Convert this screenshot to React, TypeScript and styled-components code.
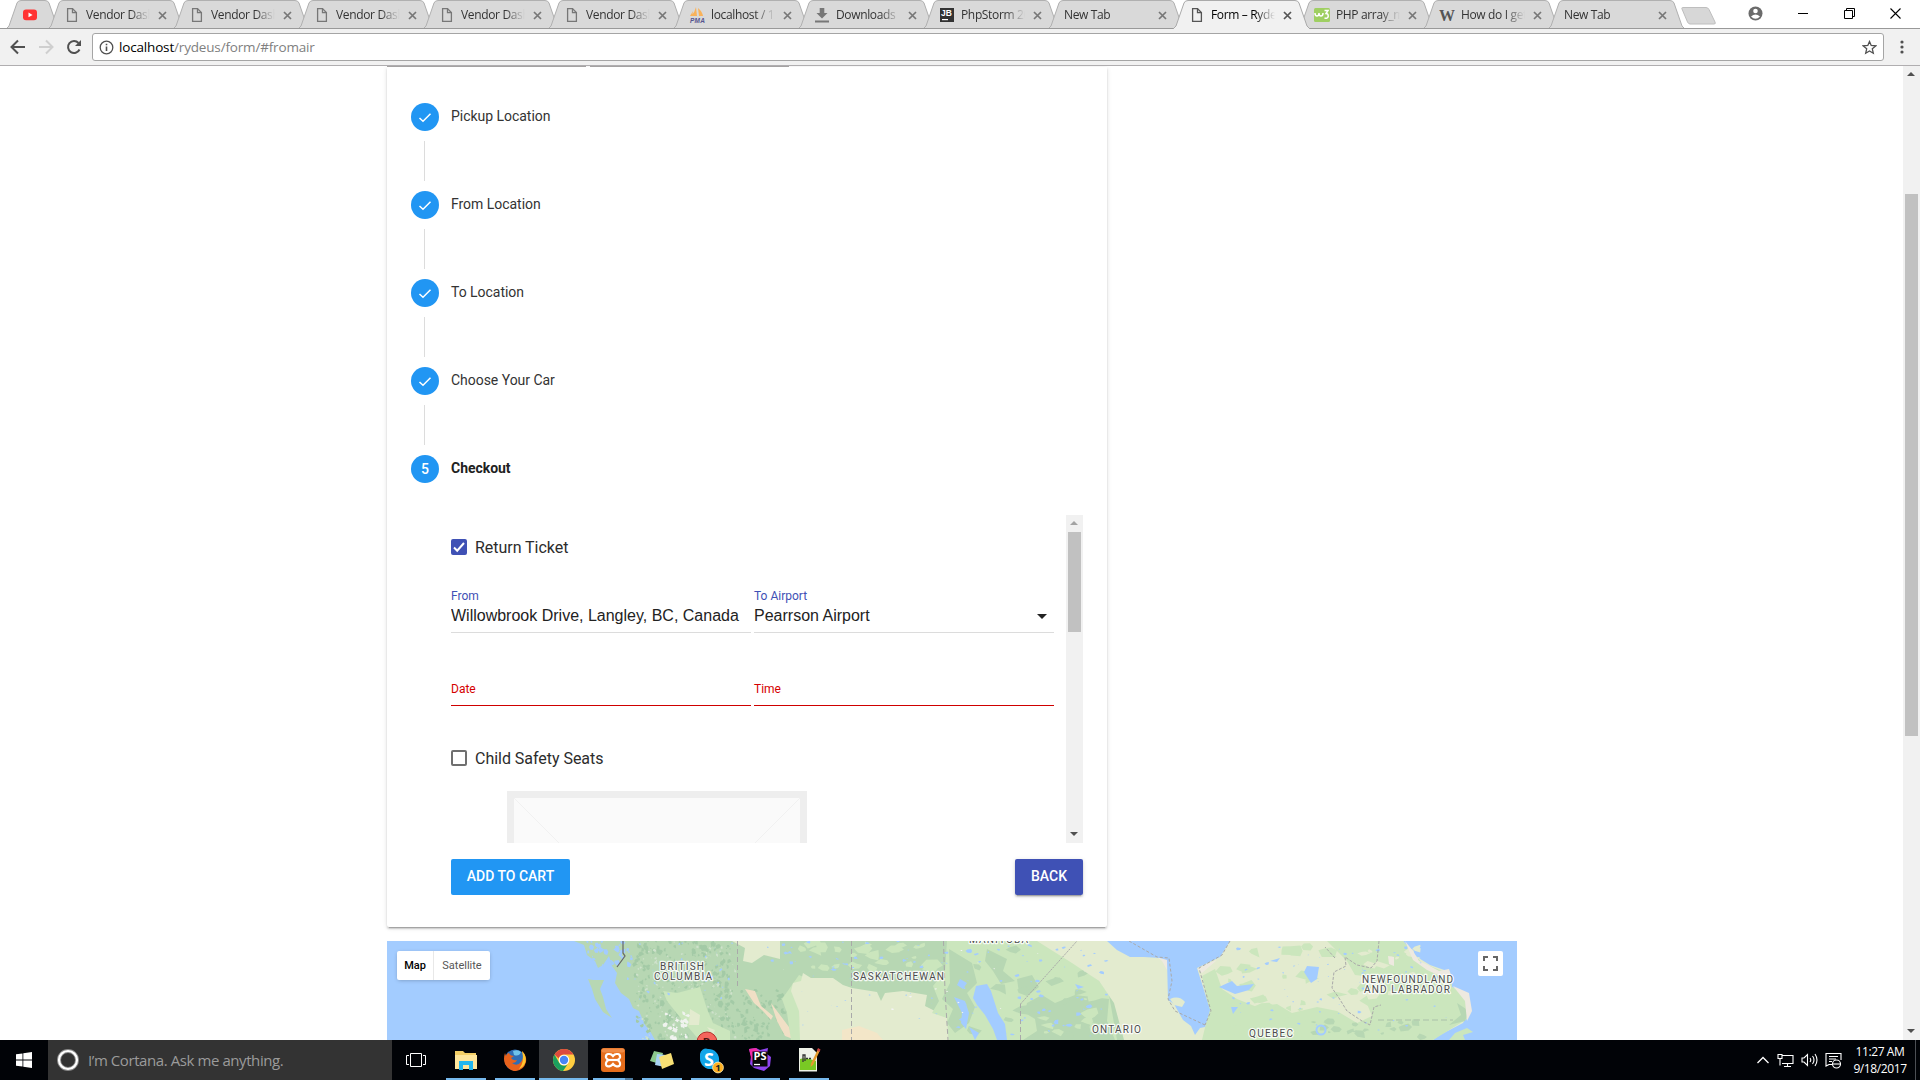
import React from "react";
import styled, { createGlobalStyle } from "styled-components";

const Global = createGlobalStyle`
  * { box-sizing: border-box; }
  html, body { margin: 0; padding: 0; background: #fff; overflow: hidden; }
  body { font-family: Roboto, "Liberation Sans", sans-serif; }
`;

const uiFont = `"Open Sans", "Noto Sans", sans-serif`;

const Screen = styled.div`
  width: 1920px;
  height: 1080px;
  display: flex;
  flex-direction: column;
  overflow: hidden;
`;

/* ---------- browser tabs ---------- */

const TabStrip = styled.div`
  height: 29px;
  display: flex;
  align-items: flex-start;
  padding-left: 6px;
  background: linear-gradient(#fff 28px, #999 28px);
`;

const Tab = styled.div<{ $w: number; $active?: boolean }>`
  flex: none;
  position: relative;
  z-index: ${(p) => (p.$active ? 2 : 1)};
  width: ${(p) => p.$w}px;
  height: 29px;
  margin-right: -12px;
  display: grid;
  grid-template-columns: 100%;
  > * {
    grid-area: 1 / 1;
  }
`;

const TabBody = styled.div`
  display: flex;
  align-items: center;
  height: 29px;
  min-width: 0;
  padding: 0 18px 1px 18px;
`;

const TabIcon = styled.div`
  width: 20px;
  height: 16px;
  margin: 1px 0 0 -2px;
  display: flex;
  flex: none;
  svg {
    display: block;
  }
`;

const TabTitle = styled.div<{ $active?: boolean; $wide?: boolean }>`
  flex: 1;
  min-width: 0;
  height: 18px;
  margin: 1px 8px 0 ${(p) => (p.$wide ? -2 : 2)}px;
  overflow: hidden;
  white-space: nowrap;
  font: 12px/17px ${uiFont};
  letter-spacing: -0.35px;
  color: ${(p) => (p.$active ? "#000" : "#333")};
  mask-image: linear-gradient(to right, #000 calc(100% - 20px), transparent);
`;

const TabClose = styled.div`
  width: 9px;
  height: 9px;
  margin-top: 2px;
  display: flex;
  flex: none;
`;

const NewTabShape = styled.div`
  margin: 7px 0 0 8px;
  display: flex;
`;

const WindowControls = styled.div`
  display: flex;
  align-items: center;
  margin-left: auto;
  height: 26px;
  padding-right: 19px;
  gap: 35px;
  svg {
    display: block;
  }
`;

function TabShape({ w, active }: { w: number; active?: boolean }) {
  return (
    <svg width={w} height="29">
      <path
        d={`M0.5 28.5 L3 26 L11 3 Q12 .5 15 .5 H${w - 15} Q${w - 12} .5 ${w - 11} 3 L${w - 3} 26 L${w - 0.5} 28.5`}
        fill={active ? "#f1f1f1" : "#d9d9d9"}
        stroke={active ? "#aaa" : "#b0b0b0"}
      />
      {active ? <path d={`M1 28.5H${w - 1}`} stroke="#f1f1f1" /> : <path d={`M0 28.5H${w}`} stroke="#999" />}
    </svg>
  );
}

const PageIcon = ({ c = "#777" }: { c?: string }) => (
  <svg width="16" height="16" viewBox="0 0 16 16" fill="none" stroke={c} strokeWidth="1.3">
    <path d="M3.6 1.6H8.5L12.4 5.5V14.4H3.6Z" />
    <path d="M8.5 1.6V5.6H12.4" />
  </svg>
);

const PmaIcon = () => (
  <svg width="17" height="16" viewBox="0 0 17 16">
    <path d="M7 0L8 9H2Q6 5 7 0ZM9 1Q13 4 14 9H10ZM4 4L3 9H1Z" fill="#f9b25a" />
    <text x="1" y="15.5" fontSize="6.5" fontWeight="700" fontStyle="italic" fontFamily="Liberation Sans" fill="#55558f" textLength="15">
      PMA
    </text>
  </svg>
);

const DownloadIcon = () => (
  <svg width="16" height="16" viewBox="0 0 16 16" fill="#777">
    <path d="M5.7 1H10.3V6H13.5L8 11.5L2.5 6H5.7ZM1 13.5H15V15.5H1Z" />
  </svg>
);

const JbIcon = () => (
  <svg width="16" height="16" viewBox="0 0 16 16">
    <rect x="1" y="1" width="14" height="14" fill="#333" />
    <text x="2" y="8.500" fontSize="8.500" fontWeight="700" fontFamily="Liberation Sans" fill="#fff" textLength="11">
      JB
    </text>
    <rect x="3" y="12" width="6" height="1.2" fill="#fff" />
  </svg>
);

const W3Icon = () => (
  <svg width="16" height="16" viewBox="0 0 16 16">
    <rect y="1" width="16" height="14" rx="1.5" fill="#9fcf62" />
    <path d="M1 6Q1 9 3 9T5 6Q5 9 7 9T9 6M10.5 3.500H14L12 6.5Q14.500 6.500 14.200 9.500Q13.500 12 10.500 11" fill="none" stroke="#fff" strokeWidth="1.5" />
  </svg>
);

const WikiIcon = () => (
  <svg width="16" height="16" viewBox="0 0 16 16">
    <text x="0" y="14" fontSize="17" fontWeight="700" fontFamily="Liberation Serif" fill="#555" textLength="16" lengthAdjust="spacingAndGlyphs">
      W
    </text>
  </svg>
);

const YoutubeIcon = () => (
  <svg width="16" height="16" viewBox="0 0 16 16">
    <rect x="1" y="2.600" width="14" height="10.600" rx="3" fill="#ff3333" />
    <path d="M6.500 5.500V10.300L10.600 7.900Z" fill="#fff" />
  </svg>
);

const CloseX = ({ c = "#777" }: { c?: string }) => (
  <svg width="9" height="9" viewBox="0 0 9 9">
    <path d="M1 1L8 8M8 1L1 8" stroke={c} strokeWidth="1.7" />
  </svg>
);

type TabInfo = { title: string; icon?: React.ReactNode; active?: boolean };
const vendor: TabInfo = { title: "Vendor Dashboard", icon: <PageIcon /> };
const tabs: TabInfo[] = [
  vendor,
  vendor,
  vendor,
  vendor,
  vendor,
  { title: "localhost / 127.0.0.1", icon: <PmaIcon /> },
  { title: "Downloads", icon: <DownloadIcon /> },
  { title: "PhpStorm 2017", icon: <JbIcon /> },
  { title: "New Tab" },
  { title: "Form – Rydeus", icon: <PageIcon c="#555" />, active: true },
  { title: "PHP array_merge", icon: <W3Icon /> },
  { title: "How do I get", icon: <WikiIcon /> },
  { title: "New Tab" },
];

/* ---------- toolbar ---------- */

const Toolbar = styled.div`
  height: 37px;
  flex: none;
  display: flex;
  align-items: center;
  background: #f1f1f1;
  border-bottom: 1px solid #b0aeb0;
  padding: 0 10px 0 9px;
`;

const NavButtons = styled.div`
  display: flex;
  gap: 10px;
  width: 83px;
  flex: none;
`;

const AddressBar = styled.div`
  width: 1792px;
  height: 28px;
  border: 1px solid #a5a5a5;
  border-radius: 3px;
  background: #fff;
  display: flex;
  align-items: center;
  padding: 0 6px;
  gap: 5px;
`;

const Url = styled.div`
  flex: 1;
  font: 13.500px/20px ${uiFont};
  letter-spacing: -0.17px;
  color: #808080;
  b {
    font-weight: 400;
    color: #000;
  }
`;

const MenuDots = styled.div`
  margin-left: 16px;
  display: flex;
`;

/* ---------- page ---------- */

const Page = styled.main`
  height: 974px;
  flex: none;
  display: flex;
  overflow: hidden;
`;

const Content = styled.div`
  flex: 1;
  padding-left: 387px;
  overflow: hidden;
`;

const TopBars = styled.div`
  display: flex;
  gap: 4px;
  height: 1px;
`;

const TopBar = styled.div`
  width: 199px;
  background: #a4a2a2;
`;

const Card = styled.section`
  width: 720px;
  height: 860px;
  padding: 36px 24px 0;
  border-radius: 0 0 2px 2px;
  box-shadow: 0 2px 2px 0 rgba(0, 0, 0, 0.14), 0 3px 1px -2px rgba(0, 0, 0, 0.2), 0 1px 5px 0 rgba(0, 0, 0, 0.12);
`;

const Step = styled.div`
  display: flex;
  align-items: center;
  gap: 12px;
  height: 28px;
`;

const StepBadge = styled.div`
  width: 28px;
  height: 28px;
  border-radius: 50%;
  background: #2196f3;
  color: #fff;
  font-size: 14px;
  font-weight: 500;
  display: flex;
  align-items: center;
  justify-content: center;
`;

const StepLabel = styled.div<{ $active?: boolean }>`
  font-size: 14px;
  line-height: 20px;
  padding-bottom: 2px;
  letter-spacing: -0.03px;
  font-weight: ${(p) => (p.$active ? 700 : 400)};
  color: ${(p) => (p.$active ? "#212121" : "#333")};
`;

const Connector = styled.div`
  width: 1px;
  height: 40px;
  margin: 10px 0 10px 13px;
  background: #dcdcdc;
`;

const ScrollPane = styled.div`
  margin: 32px 0 0 40px;
  width: 632px;
  height: 328px;
  display: flex;
  overflow: hidden;
`;

const Form = styled.div`
  width: 615px;
  padding-top: 20px;
`;

const CheckRow = styled.label`
  display: flex;
  align-items: center;
  gap: 8px;
  height: 24px;
  font-size: 16px;
  letter-spacing: -0.03px;
  color: #2c2c2c;
`;

const CheckBox = styled.span<{ $checked?: boolean }>`
  width: 16px;
  height: 16px;
  border-radius: 2px;
  border: 2px solid ${(p) => (p.$checked ? "#3f51b5" : "#6f6f6f")};
  background: ${(p) => (p.$checked ? "#3f51b5" : "#fff")};
  display: flex;
`;

const FieldRow = styled.div<{ $top: number; $bottom: number }>`
  display: flex;
  gap: 3px;
  padding-top: ${(p) => p.$top}px;
  padding-bottom: ${(p) => p.$bottom}px;
`;

const Field = styled.div<{ $error?: boolean }>`
  width: 300px;
  height: ${(p) => (p.$error ? 24 : 44)}px;
  border-bottom: 1px solid ${(p) => (p.$error ? "#cf0000" : "#dcdcdc")};
`;

const FieldLabel = styled.div<{ $error?: boolean }>`
  font-size: 12px;
  line-height: 14px;
  color: ${(p) => (p.$error ? "#d50000" : "#3f51b5")};
`;

const FieldValue = styled.div`
  display: flex;
  justify-content: space-between;
  align-items: center;
  font: 16px/20px "Liberation Sans", Arial, sans-serif;
  color: #222;
  padding: 3px 7px 0 0;
  white-space: nowrap;
`;

const Placeholder = styled.div`
  margin: 21px 0 0 56px;
  width: 300px;
  height: 200px;
  border: 7px solid #eee;
  background: #fafafa;
`;

const Actions = styled.div`
  margin: 16px 0 0 40px;
  width: 632px;
  display: flex;
  justify-content: space-between;
`;

const Button = styled.button<{ $raised?: boolean }>`
  height: 36px;
  width: ${(p) => (p.$raised ? 68 : 119)}px;
  padding: 0 0 2px;
  border: 0;
  border-radius: 2px;
  font: 500 14px/34px Roboto, sans-serif;
  color: #fff;
  background: ${(p) => (p.$raised ? "#3f51b5" : "#2196f3")};
  box-shadow: ${(p) => (p.$raised ? "0 2px 2px rgba(0,0,0,.14), 0 3px 1px -2px rgba(0,0,0,.2), 0 1px 5px rgba(0,0,0,.12)" : "none")};
`;

const ScrollTrack = styled.div<{ $h: number }>`
  width: 17px;
  height: ${(p) => p.$h}px;
  flex: none;
  background: #f1f1f1;
  display: flex;
  flex-direction: column;
  align-items: center;
`;

const ScrollArrow = styled.div<{ $end?: boolean }>`
  height: 17px;
  width: 17px;
  padding: 0 1px 1px 0;
  margin-top: ${(p) => (p.$end ? "auto" : 0)};
  display: flex;
  align-items: center;
  justify-content: center;
`;

const ScrollThumb = styled.div<{ $top: number; $h: number }>`
  width: 13px;
  height: ${(p) => p.$h}px;
  margin-top: ${(p) => p.$top}px;
  background: #c1c1c1;
`;

function Scrollbar({ h, top, thumb, atTop }: { h: number; top: number; thumb: number; atTop?: boolean }) {
  return (
    <ScrollTrack $h={h}>
      <ScrollArrow>
        <svg width="8" height="4">
          <path d="M0 4L4 0L8 4Z" fill={atTop ? "#a3a3a3" : "#505050"} />
        </svg>
      </ScrollArrow>
      <ScrollThumb $top={top} $h={thumb} />
      <ScrollArrow $end>
        <svg width="8" height="4">
          <path d="M0 0L4 4L8 0Z" fill="#505050" />
        </svg>
      </ScrollArrow>
    </ScrollTrack>
  );
}

/* ---------- map ---------- */

const MapFrame = styled.div`
  margin-top: 14px;
  width: 1130px;
  height: 99px;
  position: relative;
  overflow: hidden;
`;

const MapType = styled.div`
  position: absolute;
  left: 10px;
  top: 10px;
  height: 29px;
  display: flex;
  background: #fff;
  border-radius: 2px;
  box-shadow: 0 1px 4px -1px rgba(0, 0, 0, 0.3);
`;

const MapTypeItem = styled.div<{ $on?: boolean }>`
  width: ${(p) => (p.$on ? 37 : 56)}px;
  text-align: center;
  font-size: 11px;
  line-height: 29px;
  font-weight: ${(p) => (p.$on ? 500 : 400)};
  color: ${(p) => (p.$on ? "#000" : "#565656")};
  border-right: ${(p) => (p.$on ? "1px solid #e8e8e8" : "0")};
`;

const Fullscreen = styled.div`
  position: absolute;
  right: 14px;
  top: 10px;
  width: 25px;
  height: 25px;
  background: #fff;
  border-radius: 2px;
  display: flex;
  align-items: center;
  justify-content: center;
`;

let seed = 17;
const rnd = () => {
  seed = (seed * 16807) % 2147483647;
  return seed / 2147483647;
};

function scatter(n: number, x0: number, x1: number, y0: number, y1: number, size: number, flat = 0.6) {
  let d = "";
  for (let i = 0; i < n; i++) {
    const cx = x0 + rnd() * (x1 - x0);
    const cy = y0 + rnd() * (y1 - y0);
    const r = size * (0.3 + rnd());
    for (let k = 0; k < 6; k++) {
      const a = (k / 6) * Math.PI * 2;
      const q = r * (0.4 + rnd() * 0.9);
      d += `${k ? "L" : "M"}${(cx + Math.cos(a) * q).toFixed(1)} ${(cy + Math.sin(a) * q * flat).toFixed(1)}`;
    }
    d += "Z";
  }
  return d;
}

const WATER = "#a3ccff";
const layers: [string, string][] = [
  ["#a3caa6", scatter(260, 248, 345, 0, 99, 2.2, 1.1)],
  ["#a3caa6", scatter(90, 345, 402, 50, 99, 2.2, 1.1)],
  ["#cfe2cc", scatter(120, 250, 350, 0, 99, 1.3, 1)],
  ["#cbe6bd", "M276 50L290 52L313 46L320 68L326 82L343 90L343 99H312L296 80L280 60Z"],
  ["#e3ebcf", "M303 68L313 74L312 84L302 84ZM320 86L328 89L326 94ZM345 0H393V18L377 14L365 22L356 20L358 7Z"],
  ["#f0f3ef", scatter(28, 276, 302, 72, 98, 2.4, 0.9)],
  ["#f0dfc5", "M358 48L368 50L374 65L386 75L384 79L376 70L367 62ZM384 62L402 86L406 98L398 95L390 80Z"],
  ["#cbe6bd", "M412 34L426 40L433 58L424 70L412 68L414 99H404L400 72L395 58Z"],
  ["#e3ebcf", "M416 32L424 37L446 37L456 44L465 47L490 51L494 60L498 52L516 50L540 54L538 65L552 72L560 77L562 99H413L412 70L404 50L406 42L414 40Z"],
  ["#f3e6c8", "M455 89L472 85L490 92L496 99H455Z"],
  ["#cbe6bd", "M560 0H652L685 20L712 40L722 54L730 99H562L560 77L545 72L552 60L546 45L558 30Z"],
  ["#b7d7b3", "M562 8L585 22L590 42L580 52L588 66L582 82L568 92L560 82L566 68L555 58L563 42ZM600 8L620 18L616 30L628 40L614 43L606 30L598 20ZM630 38L645 34L652 46L640 55L632 52ZM640 62L655 54L668 62L688 54L722 58L720 80L728 99H636L650 90L648 78L638 72Z"],
  ["#b7d7b3", scatter(22, 575, 715, 5, 95, 8)],
  ["#cbe6bd", scatter(24, 400, 550, 0, 30, 7)],
  ["#cbe6bd", scatter(12, 650, 720, 50, 99, 7)],
  ["#e3ebcf", "M650 0H1016L1030 16L1043 24L1063 31L1065 46L1080 52L1083 69L1076 82L1053 94L1046 99H737L727 62L712 40L685 22Z"],
  ["#cbe6bd", "M940 0H1016L1035 22L1063 33L1065 46L1080 54L1080 78L1046 99H815L822 70L815 35L828 28L835 48L850 58L870 66L890 63L905 72L930 66L950 70L970 82L985 75L978 58L995 50L985 36L968 34L960 20Z"],
  ["#cbe6bd", scatter(34, 830, 1000, 2, 95, 8)],
  ["#e3ebcf", scatter(16, 975, 1050, 5, 60, 6)],
  ["#b7d7b3", scatter(20, 925, 1040, 80, 97, 6)],
  ["#b7d7b3", "M1070 62L1082 70L1078 80L1062 84L1074 74Z"],
  ["#eee9e0", "M1018 0L1026 10L1032 20L1041 24L1052 30L1062 28L1064 34L1053 35L1040 29L1026 19ZM1066 45L1082 52L1085 70L1080 80L1078 60ZM1001 15L1007 16L1007 25L1002 23ZM770 16L784 19L780 29L775 20ZM810 28L822 22L830 19L815 32Z"],
  [WATER, "M720 0L730 9L743 16L757 16L773 17L780 19L781 59L787 63L796 79L804 85L808 94L813 87L818 86L823 69L816 46L810 27L833 16L843 0Z"],
  ["#e3ebcf", "M783 58Q792 54 798 61L795 66L787 64Z"],
  ["#cbe6bd", "M1062 99L1068 92L1080 87L1086 91L1076 94L1078 99Z"],
  [WATER, "M589 45L600 43L604 50L611 72L618 83L620 99H610L606 88L598 74L590 64L586 57ZM567 56L578 60L582 72L579 88L574 82L575 72ZM573 38L580 42L576 48L570 44ZM582 86L592 92L588 99ZM688 43L697 46L691 48Z"],
  [WATER, "M920 25L932 26L930 38L924 42L917 31ZM832 46L845 40L850 45L867 43L862 49L848 53ZM883 20L893 17L890 21ZM844 66L851 66L846 73Z"],
  [WATER, scatter(65, 570, 720, 0, 95, 2.4)],
  [WATER, scatter(32, 380, 560, 0, 30, 2.2)],
  [WATER, scatter(18, 410, 560, 30, 95, 0.9)],
  [WATER, scatter(65, 845, 1060, 5, 90, 1.9)],
  [WATER, scatter(40, 195, 245, 0, 25, 2.2, 1.2)],
  [WATER, scatter(30, 237, 345, 0, 60, 1.2, 1.2)],
  ["#f4f4f4", scatter(14, 395, 720, 0, 80, 1.2)],
];

const MapLabel = ({ x, y, w, children }: { x: number; y: number; w: number; children: string }) => (
  <text
    x={x}
    y={y}
    textLength={w}
    fontFamily="Roboto"
    fontSize="10"
    fill="#4c4c4c"
    stroke="#fff"
    strokeOpacity="0.85"
    strokeWidth="2.500"
    paintOrder="stroke"
    strokeLinejoin="round"
  >
    {children}
  </text>
);

function MapArt() {
  return (
    <svg width="1130" height="99" viewBox="0 0 1130 99">
      <rect width="1130" height="99" fill={WATER} />
      <path
        d="M187 0L197 4L200 14L208 20L211 27L216 24L222 15L225 25L230 32L228 42L234 52L242 58L246 67L252 70L258 84L263 90L268 99H740V0Z"
        fill="#b7d7b3"
      />
      <path d="M201 38L206 39L217 39L213 48L216 56L219 68L225 77L216 71L208 58L205 48Z" fill="#b7d7b3" />
      {layers.map(([fill, d], i) => (
        <path key={i} d={d} fill={fill} />
      ))}
      <path d="M236 0V12L238 15L230 26" fill="none" stroke="#666" strokeWidth="1.200" />
      <g fill="none" stroke="#a9a9a9" strokeDasharray="5 3">
        <path d="M350.500 0V46M464.500 0V99M556.500 0L558 50L561 99M633.500 99V63" />
        <path d="M633.500 63L690 0" strokeDasharray="2 1" />
        <path d="M742 0L770 16L782 17L785 40L781 58L788 70L818 84M843 0L835 14L812 27L817 45L824 70L818 84" strokeDasharray="3 2" />
        <path d="M992 0L990 20L984 27L970 24L958 16L959 25L947 31L945 47L952 57L960 70L975 80L983 84L987 66L994 64M948 17L938 6" strokeDasharray="3 1.500" />
        <path d="M991 79H1066" stroke="#b5cdb0" strokeWidth="1.500" strokeDasharray="6 3" />
      </g>
      <circle cx="934" cy="89" r="4.500" fill="none" stroke={WATER} strokeWidth="2" />
      <circle cx="320" cy="101" r="10" fill="#f5655c" stroke="#b4322d" />
      <text x="316" y="105" fontSize="11" fontWeight="700" fontFamily="Roboto" fill="#4d1512">
        B
      </text>
      <MapLabel x={273} y={29} w={44}>BRITISH</MapLabel>
      <MapLabel x={267} y={39} w={58}>COLUMBIA</MapLabel>
      <MapLabel x={466} y={39} w={91}>SASKATCHEWAN</MapLabel>
      <MapLabel x={582} y={2} w={59}>MANITOBA</MapLabel>
      <MapLabel x={705} y={92} w={49}>ONTARIO</MapLabel>
      <MapLabel x={862} y={96} w={44}>QUEBEC</MapLabel>
      <MapLabel x={975} y={42} w={91}>NEWFOUNDLAND</MapLabel>
      <MapLabel x={977} y={52} w={86}>AND LABRADOR</MapLabel>
    </svg>
  );
}

/* ---------- taskbar ---------- */

const Taskbar = styled.footer`
  height: 40px;
  flex: none;
  display: flex;
  background: #010307;
  color: #fff;
`;

const StartButton = styled.div`
  width: 48px;
  display: flex;
  align-items: center;
  justify-content: center;
`;

const Cortana = styled.div`
  width: 344px;
  background: #333;
  display: flex;
  align-items: center;
  gap: 9px;
  padding-left: 9px;
  font: 15px/20px ${uiFont};
  letter-spacing: -0.42px;
  color: #9b9b9b;
`;

const TaskView = styled.div`
  width: 49px;
  padding-right: 1px;
  display: flex;
  align-items: center;
  justify-content: center;
`;

const TaskItem = styled.div<{ $active?: boolean }>`
  width: 49px;
  display: flex;
  flex-direction: column;
  align-items: center;
  justify-content: space-between;
  background: ${(p) => (p.$active ? "#35373a" : "transparent")};
  svg {
    display: block;
    margin-top: 8px;
  }
`;

const Underline = styled.div<{ $active?: boolean; $split?: boolean }>`
  width: ${(p) => (p.$active ? 49 : 40)}px;
  height: 2px;
  background: ${(p) => (p.$split ? "linear-gradient(90deg,#76b9ed 32px,#4d7ba0 32px)" : "#76b9ed")};
`;

const Tray = styled.div`
  margin-left: auto;
  display: flex;
  align-items: center;
  gap: 7px;
`;

const Clock = styled.div`
  width: 62px;
  text-align: center;
  font: 12px/17px ${uiFont};
  letter-spacing: -0.4px;
  white-space: nowrap;
`;

const ShowDesktop = styled.div`
  height: 40px;
  width: 5px;
  margin-left: -3px;
  border-left: 1px solid #4c4f54;
`;

const apps: React.ReactNode[] = [
  <svg width="24" height="24" viewBox="0 0 24 24">
    <path d="M1 3H9L11 5H22V21H1Z" fill="#f4cf66" />
    <path d="M1 7H23V21H1Z" fill="#ffe69b" />
    <path d="M5 13H19V22H15V17H9V22H5Z" fill="#22b7ef" />
  </svg>,
  <svg width="24" height="24" viewBox="0 0 24 24">
    <circle cx="12" cy="12" r="10.500" fill="#2f6db5" />
    <path d="M10 3Q15 1 18 4Q16 9 11 7Z" fill="#6fc3ea" />
    <path d="M2 5Q0 11 2 16Q6 23 13 23Q21 22 23 14Q24 8 19 3Q22 9 18 14Q14 19 9 15Q13 15 14 12Q10 13 8 10L11 8Q7 8 6 5Q4 5 3 8Z" fill="#e8621c" />
    <path d="M19 3Q24 8 22.500 14Q21 19 16 21Q22 14 19 3Z" fill="#ffc52e" />
  </svg>,
  <svg width="24" height="24" viewBox="0 0 24 24">
    <circle cx="12" cy="12" r="11" fill="#ffcd40" />
    <path d="M2.500 6.500A11 11 0 0 1 21.500 6.500H12A5.500 5.500 0 0 0 6.700 10.500Z" fill="#dd4b3e" />
    <path d="M2.500 6.500A11 11 0 0 0 11 23L15.500 16.500A5.500 5.500 0 0 1 7 14.500Z" fill="#1b9f5f" />
    <circle cx="12" cy="12" r="5.300" fill="#fff" />
    <circle cx="12" cy="12" r="4.200" fill="#4886f5" />
  </svg>,
  <svg width="24" height="24" viewBox="0 0 24 24">
    <rect width="24" height="24" rx="3" fill="#e56d1c" />
    <rect x=".5" y=".5" width="23" height="4" rx="2" fill="#f08b45" />
    <path d="M7 6H8.500Q10.500 6 12 8Q13.500 6 15.500 6H17Q19.500 6.500 19 9.500Q18.500 11 16.500 12Q18.500 13 19 15Q19.500 18 17 18.300H15.500Q13.500 18 12 16Q10.500 18 8.500 18.300H7Q4.500 18 5 15Q5.500 13 7.500 12Q5.500 11 5 9.500Q4.500 6.500 7 6Z" fill="none" stroke="#fff" strokeWidth="2.200" />
    <path d="M8 12H16" stroke="#fff" strokeWidth="2.200" />
  </svg>,
  <svg width="26" height="24" viewBox="0 0 26 24">
    <path d="M5 3L14 5L11 16L1 13Z" fill="#8cc98d" />
    <path d="M8 6L17 7L16 19L6 17Z" fill="#a9d3f4" />
    <path d="M10 9L22 5L25 16L13 21Z" fill="#f7df74" />
  </svg>,
  <svg width="26" height="26" viewBox="0 0 26 26">
    <path d="M2 6A6 6 0 0 1 10 1A10.500 10.500 0 0 1 21 13A6 6 0 0 1 14 21A10.500 10.500 0 0 1 2 10Z" fill="#12a5e8" />
    <text x="6" y="17.500" fontSize="18" fontWeight="700" fontFamily="Open Sans" fill="#fff">
      S
    </text>
    <circle cx="20" cy="19.500" r="5.400" fill="#fdb022" stroke="#fff0bd" strokeWidth=".8" />
    <text x="17.300" y="23" fontSize="9.500" fontWeight="700" fontFamily="Open Sans" fill="#222">
      1
    </text>
  </svg>,
  <svg width="24" height="24" viewBox="0 0 24 24">
    <path d="M1 1L8 0L12 2L20 0L19 6L23 9L22 18L16 23L6 20L2 16L3 8Z" fill="#8f45ef" />
    <path d="M1 1L8 0L12 4L4 14Z" fill="#f12aa7" />
    <rect x="4.500" y="3.500" width="15" height="15" fill="#080808" />
    <text x="5.500" y="12" fontSize="10" fontWeight="700" fontFamily="Open Sans" fill="#fff" textLength="13" lengthAdjust="spacingAndGlyphs">
      PS
    </text>
    <path d="M6 16.500H12" stroke="#fff" strokeWidth="1.300" />
  </svg>,
  <svg width="26" height="24" viewBox="0 0 26 24">
    <path d="M3 0H16L21 5V23.500H3Z" fill="#eef2e8" />
    <path d="M4 11Q10 9 20 13V22H4Z" fill="#79c924" />
    <path d="M7 14V7H9V13M10 10.500H12M13 10.500H15" stroke="#333" strokeWidth="1.300" fill="none" />
    <path d="M22 1L24 2.500L17 17L14.500 19L15 15.500Z" fill="#e59b2f" />
    <path d="M22 0L24.500 1.500L23.500 4L21 2.500Z" fill="#cc4141" />
  </svg>,
];

const steps = ["Pickup Location", "From Location", "To Location", "Choose Your Car"];

export default function App() {
  return (
    <Screen>
      <Global />
      <TabStrip>
        <Tab $w={54}>
          <TabShape w={54} />
          <TabBody>
            <TabIcon>
              <YoutubeIcon />
            </TabIcon>
          </TabBody>
        </Tab>
        {tabs.map((t, i) => (
          <Tab key={i} $w={137} $active={t.active}>
            <TabShape w={137} active={t.active} />
            <TabBody>
              {t.icon && <TabIcon>{t.icon}</TabIcon>}
              <TabTitle $active={t.active} $wide={!t.icon}>
                {t.title}
              </TabTitle>
              <TabClose>
                <CloseX c={t.active ? "#555" : "#777"} />
              </TabClose>
            </TabBody>
          </Tab>
        ))}
        <NewTabShape>
          <svg width="36" height="18">
            <path d="M1.500 .5H25Q27 .5 28 2.500L34 15Q35 17 33 17H9Q7.500 17 6.500 15L1 2Q.5 .5 1.500 .5Z" fill="#d7d7d7" stroke="#bebebe" />
          </svg>
        </NewTabShape>
        <WindowControls>
          <svg width="15" height="15" viewBox="0 0 15 15">
            <circle cx="7.500" cy="7.500" r="7" fill="#6b6b6b" />
            <circle cx="7.500" cy="5" r="2.300" fill="#fff" />
            <path d="M3 10.500Q7.500 6.500 12 10.500Q7.500 15 3 10.500Z" fill="#fff" />
          </svg>
          <svg width="11" height="11">
            <path d="M0 5.500H10" stroke="#000" />
          </svg>
          <svg width="11" height="11" fill="none" stroke="#000">
            <path d="M.5 2.500H8.500V10.500H.5ZM2.500 2.500V.5H10.500V8.500H8.500" />
          </svg>
          <svg width="11" height="11">
            <path d="M.5 .5L10.500 10.500M10.500 .5L.5 10.500" stroke="#000" strokeWidth="1.100" />
          </svg>
        </WindowControls>
      </TabStrip>

      <Toolbar>
        <NavButtons>
          <svg width="18" height="18" viewBox="0 0 18 18">
            <path d="M16 9H3M9 2.500L2.500 9L9 15.500" fill="none" stroke="#505050" strokeWidth="2" />
          </svg>
          <svg width="18" height="18" viewBox="0 0 18 18">
            <path d="M2 9H15M9 2.500L15.500 9L9 15.500" fill="none" stroke="#cfcfcf" strokeWidth="2" />
          </svg>
          <svg width="18" height="18" viewBox="0 0 18 18">
            <path d="M14.500 11.500A6 6 0 1 1 13.500 5" fill="none" stroke="#505050" strokeWidth="2" />
            <path d="M16 2V8H10Z" fill="#505050" />
          </svg>
        </NavButtons>
        <AddressBar>
          <svg width="15" height="15" viewBox="0 0 15 15">
            <circle cx="7.500" cy="7.500" r="6.300" fill="none" stroke="#505050" strokeWidth="1.300" />
            <path d="M7.500 6.500V11M7.500 3.800V5.200" stroke="#505050" strokeWidth="1.600" />
          </svg>
          <Url>
            <b>localhost</b>/rydeus/form/#fromair
          </Url>
          <svg width="15" height="15" viewBox="0 0 15 15">
            <path d="M7.500 1.500L9.200 5.500L13.700 5.900L10.300 8.800L11.300 13.200L7.500 10.900L3.700 13.200L4.700 8.800L1.300 5.900L5.800 5.500Z" fill="none" stroke="#505050" strokeWidth="1.300" />
          </svg>
        </AddressBar>
        <MenuDots>
          <svg width="4" height="14" fill="#505050">
            <circle cx="2" cy="2" r="1.600" />
            <circle cx="2" cy="7" r="1.600" />
            <circle cx="2" cy="12" r="1.600" />
          </svg>
        </MenuDots>
      </Toolbar>

      <Page>
        <Content>
          <TopBars>
            <TopBar />
            <TopBar />
          </TopBars>
          <Card>
            {steps.map((s) => (
              <React.Fragment key={s}>
                <Step>
                  <StepBadge>
                    <svg width="14" height="14" viewBox="0 0 14 14">
                      <path d="M1.500 8L5 11.200L12.500 3.700" fill="none" stroke="#fff" strokeWidth="1.500" />
                    </svg>
                  </StepBadge>
                  <StepLabel>{s}</StepLabel>
                </Step>
                <Connector />
              </React.Fragment>
            ))}
            <Step>
              <StepBadge>5</StepBadge>
              <StepLabel $active>Checkout</StepLabel>
            </Step>

            <ScrollPane>
              <Form>
                <CheckRow>
                  <CheckBox $checked>
                    <svg width="12" height="12" viewBox="0 0 12 12">
                      <path d="M1 6.500L4.200 9.700L11 2" fill="none" stroke="#fff" strokeWidth="2" />
                    </svg>
                  </CheckBox>
                  Return Ticket
                </CheckRow>
                <FieldRow $top={30} $bottom={0}>
                  <Field>
                    <FieldLabel>From</FieldLabel>
                    <FieldValue>Willowbrook Drive, Langley, BC, Canada</FieldValue>
                  </Field>
                  <Field>
                    <FieldLabel>To Airport</FieldLabel>
                    <FieldValue>
                      Pearrson Airport
                      <svg width="10" height="5">
                        <path d="M0 0H10L5 5Z" fill="#222" />
                      </svg>
                    </FieldValue>
                  </Field>
                </FieldRow>
                <FieldRow $top={49} $bottom={40}>
                  <Field $error>
                    <FieldLabel $error>Date</FieldLabel>
                  </Field>
                  <Field $error>
                    <FieldLabel $error>Time</FieldLabel>
                  </Field>
                </FieldRow>
                <CheckRow>
                  <CheckBox />
                  Child Safety Seats
                </CheckRow>
                <Placeholder>
                  <svg width="286" height="186">
                    <path d="M0 0L186 186M286 0L100 186" stroke="#f1f1f1" />
                  </svg>
                </Placeholder>
              </Form>
              <Scrollbar h={328} top={0} thumb={100} atTop />
            </ScrollPane>
            <Actions>
              <Button>ADD TO CART</Button>
              <Button $raised>BACK</Button>
            </Actions>
          </Card>

          <MapFrame>
            <MapArt />
            <MapType>
              <MapTypeItem $on>Map</MapTypeItem>
              <MapTypeItem>Satellite</MapTypeItem>
            </MapType>
            <Fullscreen>
              <svg width="15" height="15" viewBox="0 0 15 15">
                <path d="M1 5V1H5M10 1H14V5M14 10V14H10M5 14H1V10" fill="none" stroke="#666" strokeWidth="2" />
              </svg>
            </Fullscreen>
          </MapFrame>
        </Content>
        <Scrollbar h={974} top={111} thumb={542} />
      </Page>

      <Taskbar>
        <StartButton>
          <svg width="16" height="16" viewBox="0 0 16 16" fill="#fff">
            <path d="M0 2.300L6.500 1.400V7.600H0ZM7.300 1.300L16 0V7.600H7.300ZM0 8.400H6.500V14.600L0 13.700ZM7.300 8.400H16V16L7.300 14.700Z" />
          </svg>
        </StartButton>
        <Cortana>
          <svg width="22" height="22">
            <circle cx="11" cy="11" r="9" fill="none" stroke="#8a8a8a" strokeWidth="4" />
            <circle cx="11" cy="11" r="9" fill="none" stroke="#fff" strokeWidth="2.200" />
          </svg>
          I’m Cortana. Ask me anything.
        </Cortana>
        <TaskView>
          <svg width="20" height="14" fill="none" stroke="#fff">
            <path d="M4.500 .5H15.500V13.500H4.500ZM3 2.500H.5V11.500H3M17 2.500H19.500V11.500H17" />
          </svg>
        </TaskView>
        {apps.map((icon, i) => (
          <TaskItem key={i} $active={i === 2}>
            {icon}
            <Underline $active={i === 2} $split={i === 3} />
          </TaskItem>
        ))}
        <Tray>
          <svg width="14" height="16" fill="none" stroke="#fff" strokeWidth="1.300">
            <path d="M1.500 11L7 5.500L12.500 11" />
          </svg>
          <svg width="17" height="16" fill="none" stroke="#fff" strokeWidth="1.100">
            <path d="M5 3.500H16V11.500H5M1 2.500H5V6.500H1ZM3 6.500V13.500M10.500 11.500V14M7 14.500H14" />
          </svg>
          <svg width="17" height="16" fill="none" stroke="#fff" strokeWidth="1.100">
            <path d="M1 6H3L6.500 2.500V13.500L3 10H1ZM9 6Q10.500 8 9 10M11.500 4Q14.500 8 11.500 12M14 2Q18 8 14 14" />
          </svg>
          <svg width="17" height="17" fill="none" stroke="#fff" strokeWidth="1.100">
            <path d="M7 12.500H4L1 14V1.500H16V8M4 4.500H13M4 7H11M4 9.500H7" />
            <circle cx="11.500" cy="12" r="4" />
            <path d="M7.500 12H15.500" />
          </svg>
          <Clock>
            11:27 AM
            <br />
            9/18/2017
          </Clock>
          <ShowDesktop />
        </Tray>
      </Taskbar>
    </Screen>
  );
}
